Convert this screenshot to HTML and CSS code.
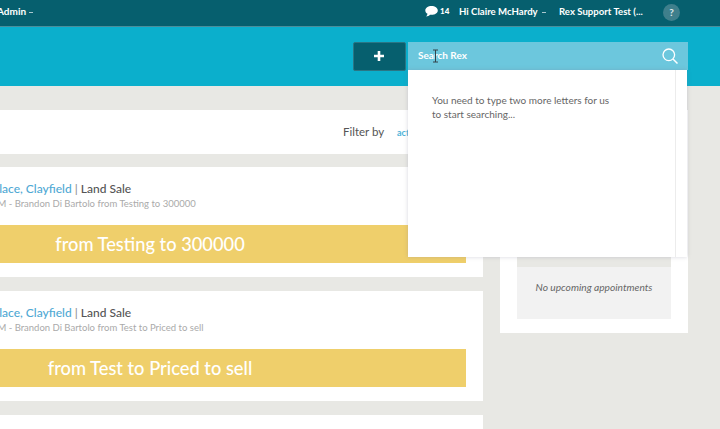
FILE: index.html
```html
<!DOCTYPE html>
<html lang="en">
<head>
<meta charset="utf-8">
<title>Rex</title>
<link rel="stylesheet" href="styles.css">
</head>
<body>
<header class="topbar">
  <span class="admin">Admin<i class="caret"></i></span>
  <span class="chat">
    <svg class="chat-icon" viewBox="0 0 13 11" width="13" height="11"><path d="M6.5 0C3 0 .3 1.9.3 4.4c0 1.4.9 2.6 2.2 3.4-.1 1-.7 1.9-1.4 2.6 1.500-.1 3-.8 3.900-1.700.5.100 1 .1 1.500.1 3.500 0 6.300-2 6.300-4.400S10 0 6.500 0z" fill="#fff"/></svg>
    <b>14</b>
  </span>
  <span class="hello">Hi Claire McHardy<i class="caret"></i></span>
  <span class="account">Rex Support Test (...</span>
  <span class="help">?</span>
</header>
<section class="toolbar">
  <button class="add" type="button">
    <svg viewBox="0 0 12 12" width="12" height="12"><path d="M6 1v10M1 6h10" stroke="#fff" stroke-width="2.600" fill="none"/></svg>
  </button>
  <div class="search">
    <div class="search-bar">
      <span class="search-label">Search Rex</span>
      <svg class="cursor" viewBox="0 0 7 14" width="7" height="14"><path d="M1 1h5M1 13h5M3.500 1v12" stroke="#33434a" stroke-width="1" fill="none"/></svg>
      <svg class="search-icon" viewBox="0 0 16 16" width="16" height="16"><circle cx="6.800" cy="6.800" r="5.800" stroke="#fff" stroke-width="1.300" fill="none"/><path d="M11 11l4.500 4.500" stroke="#fff" stroke-width="1.500" fill="none"/></svg>
    </div>
    <div class="results">
      <p class="hint">You need to type two more letters for us<br>to start searching...</p>
      <div class="track"></div>
    </div>
  </div>
</section>
<main class="content">
  <div class="feed">
    <div class="filter">
      <span class="filter-label">Filter by</span>
      <a class="filter-link">active</a>
    </div>
    <div class="cards">
      <article class="card">
        <h3 class="title"><a>Place, Clayfield</a> <span class="bar">|</span> Land Sale</h3>
        <p class="meta">AM - Brandon Di Bartolo from Testing to 300000</p>
        <div class="banner">from Testing to 300000</div>
      </article>
      <article class="card">
        <h3 class="title"><a>Place, Clayfield</a> <span class="bar">|</span> Land Sale</h3>
        <p class="meta">AM - Brandon Di Bartolo from Test to Priced to sell</p>
        <div class="banner">from Test to Priced to sell</div>
      </article>
      <article class="card card-tail"></article>
    </div>
  </div>
  <aside class="side">
    <div class="appointments">
      <div class="appointments-head"></div>
      <div class="appointments-empty">No upcoming appointments</div>
    </div>
  </aside>
</main>
</body>
</html>
```
FILE: styles.css
```css
* { box-sizing: border-box; }
html, body { margin: 0; height: 429px; overflow: hidden; }
body { background: #e8e8e4; font-family: Lato, "Open Sans", sans-serif; color: #555; width: 720px; }

.topbar { height: 27px; background: #065f6e; border-bottom: 1px solid #4a8e9b; color: #fff; display: flex; align-items: center; font-size: 9.600px; font-weight: 700; padding-bottom: 4px; }
.caret { display: inline-block; width: 4px; height: 1px; background: #a9c8ce; margin-left: 4px; vertical-align: middle; }
.admin { width: 428px; margin-left: -3px; font-size: 10px; flex: none; }
.admin .caret { margin-left: 3px; }
.chat { display: flex; align-items: center; gap: 2px; width: 34px; font-size: 8px; flex: none; }
.chat-icon { display: block; }
.hello { width: 100px; white-space: nowrap; flex: none; }
.account { width: 104px; white-space: nowrap; flex: none; }
.help { width: 17px; height: 17px; margin-top: 2px; border-radius: 50%; background: #3f7f8c; color: #dfeaec; font-size: 10px; display: flex; align-items: center; justify-content: center; flex: none; }

.toolbar { height: 59px; background: #0bafcc; display: flex; justify-content: flex-end; align-items: flex-start; padding: 15px 32px 0 0; gap: 2px; }
.add { width: 53px; height: 29px; padding: 0 2px 2px 0; background: #065f6e; border: 1px solid #2a7685; border-radius: 2px; display: flex; align-items: center; justify-content: center; }
.search { width: 280px; position: relative; }
.search-bar { height: 28px; background: #6cc7dd; display: flex; align-items: center; justify-content: space-between; padding: 0 10px; color: #fff; font-size: 10px; font-weight: 700; }
.search-label { margin-bottom: 2px; }
.cursor { position: absolute; left: 24px; top: 7px; }
.search-icon { display: block; width: 16px; height: 16px; }
.results { position: absolute; top: 28px; left: 0; width: 279px; height: 187px; background: #fff; box-shadow: 0 0 4px rgba(120, 120, 140, .3); display: flex; }
.hint { margin: 0; padding: 23px 0 0 24px; flex: 1; font-size: 10px; line-height: 14px; color: #666; }
.track { width: 12px; border-left: 1px solid #ececec; }

.content { display: flex; margin-left: -183px; padding-top: 24px; gap: 17px; }
.feed { width: 666px; flex: none; display: flex; flex-direction: column; gap: 13px; }
.cards { display: flex; flex-direction: column; gap: 14px; }
.filter { height: 44px; background: #fff; display: flex; align-items: center; padding-left: 526px; padding-bottom: 1px; }
.filter-label { font-size: 11.500px; color: #555; width: 54px; }
.filter-link { font-size: 9px; font-weight: 700; color: #4fb3d9; padding-top: 2px; }
.card { height: 110px; background: #fff; padding: 15px 17px 0; flex: none; }
.card-tail { height: 14px; padding: 0; }
.title { margin: 0 0 0 -4px; font-size: 12px; line-height: 14px; font-weight: 500; color: #555; padding-left: 162px; white-space: nowrap; }
.title a { color: #4fa9d4; }
.bar { font-weight: 400; color: #888; }
.meta { margin: 1px 0 0; padding-left: 157px; font-size: 9.500px; line-height: 14px; color: #aaa; white-space: nowrap; }
.banner { margin-top: 14px; height: 38px; background: #efcf6b; color: #fff; font-size: 18.300px; font-weight: 500; line-height: 38px; text-align: center; }

.side { width: 188px; flex: none; }
.appointments { height: 223px; background: #fff; padding: 147px 17px 0; }
.appointments-head { height: 10px; background: #e8e8e4; }
.appointments-empty { height: 52px; background: #f2f2f2; font-size: 10.200px; font-style: italic; color: #666; display: flex; align-items: center; justify-content: center; padding-bottom: 12px; }
```
